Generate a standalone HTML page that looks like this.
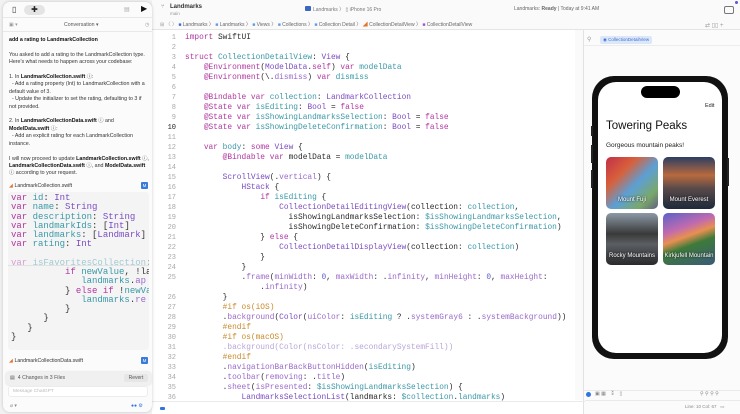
<!DOCTYPE html>
<html><head><meta charset="utf-8"><style>
*{margin:0;padding:0;box-sizing:border-box}
body{width:740px;height:414px;overflow:hidden;background:#fff;font-family:"Liberation Sans",sans-serif;position:relative;color:#222}
.a{position:absolute}
.code{font-family:"Liberation Mono",monospace;font-size:7.85px;line-height:10px;white-space:pre;color:#2b2b2b}
.ln{font-family:"Liberation Mono",monospace;font-size:7px;line-height:10px;color:#a8a8a8;text-align:right;width:26px;white-space:pre}
.k{color:#b0369f}.t{color:#7a4bc0}.i{color:#3a98a6}.p{color:#c98a2c}.f{color:#9a6ac9}.n{color:#5b5bd0}
.side{font-size:5.3px;line-height:7.4px;color:#333}
.side b{color:#111}
.lc{font-family:"Liberation Mono",monospace;font-size:9px;line-height:9.3px;white-space:pre;color:#333}
.tile{position:absolute;width:52px;height:52px;border-radius:5px;overflow:hidden}
.tile span{position:absolute;bottom:6px;left:0;right:0;text-align:center;color:#fff;font-size:6px;text-shadow:0 0 2px #000}
</style></head><body>

<div class="a" style="left:150px;top:0;width:590px;height:30px;background:#fafafa;border-bottom:1px solid #e4e4e4"></div>
<div class="a" style="left:161px;top:4px;font-size:6px;color:#999">⑂</div>
<div class="a" style="left:170px;top:4px;font-size:6px;font-weight:bold;color:#333">Landmarks</div>
<div class="a" style="left:170px;top:11px;font-size:4.5px;color:#999">main</div>
<div class="a" style="left:305px;top:6px;width:6px;height:5px;background:#3a66c4;border-radius:1px"></div>
<div class="a" style="left:313px;top:6px;font-size:5px;color:#777">Landmarks 〉 ▯ iPhone 16 Pro</div>
<div class="a" style="left:514px;top:6px;font-size:5px;color:#666">Landmarks: <b>Ready</b> | Today at 9:41 AM</div>
<div class="a" style="left:724px;top:6px;width:10px;height:8px;border:1px solid #777;border-radius:2px"></div>
<div class="a" style="left:735px;top:1px;width:3px;height:3px;background:#5a55d8;border-radius:50%"></div>
<div class="a" style="left:160px;top:21px;font-size:5px;color:#666;white-space:nowrap"><span style="color:#999">⊞ 〈 〉</span> <span style="color:#3a6fd0">■</span> Landmarks 〉 <span style="color:#5aa0e0">■</span> Landmarks 〉 <span style="color:#5aa0e0">■</span> Views 〉 <span style="color:#5aa0e0">■</span> Collections 〉 <span style="color:#5aa0e0">■</span> Collection Detail 〉 <span style="color:#e2742d">◢</span> CollectionDetailView 〉 <span style="color:#a04fd6">■</span> CollectionDetailView</div>
<div class="a" style="left:705px;top:22px;font-size:6px;color:#999">⇄ ▯▯ +</div>

<div class="a ln" style="left:150px;top:33px">1
2
3
4
5
6
7
8
9
<span style="color:#222">10</span>
11
12
13
14
15
16
17
18
19
20
21
22
23
24
25

26
27
28
29
30
31
32
33
34
35
36</div>
<div class="a code" style="left:185px;top:33px"><span class="k">import</span> SwiftUI

<span class="k">struct</span> <span class="i">CollectionDetailView</span>: <span class="t">View</span> {
    <span class="k">@Environment</span>(<span class="t">ModelData</span>.<span class="k">self</span>) <span class="k">var</span> <span class="i">modelData</span>
    <span class="k">@Environment</span>(\.<span class="f">dismiss</span>) <span class="k">var</span> <span class="i">dismiss</span>

    <span class="k">@Bindable</span> <span class="k">var</span> <span class="i">collection</span>: <span class="t">LandmarkCollection</span>
    <span class="k">@State</span> <span class="k">var</span> <span class="i">isEditing</span>: <span class="t">Bool</span> = <span class="k">false</span>
    <span class="k">@State</span> <span class="k">var</span> <span class="i">isShowingLandmarksSelection</span>: <span class="t">Bool</span> = <span class="k">false</span>
    <span class="k">@State</span> <span class="k">var</span> <span class="i">isShowingDeleteConfirmation</span>: <span class="t">Bool</span> = <span class="k">false</span>

    <span class="k">var</span> <span class="i">body</span>: <span class="k">some</span> <span class="t">View</span> {
        <span class="k">@Bindable</span> <span class="k">var</span> modelData = <span class="i">modelData</span>

        <span class="t">ScrollView</span>(.<span class="f">vertical</span>) {
            <span class="t">HStack</span> {
                <span class="k">if</span> <span class="i">isEditing</span> {
                    <span class="t">CollectionDetailEditingView</span>(collection: <span class="i">collection</span>,
                      isShowingLandmarksSelection: <span class="i">$isShowingLandmarksSelection</span>,
                      isShowingDeleteConfirmation: <span class="i">$isShowingDeleteConfirmation</span>)
                } <span class="k">else</span> {
                    <span class="t">CollectionDetailDisplayView</span>(collection: <span class="i">collection</span>)
                }
            }
            .<span class="f">frame</span>(<span class="f">minWidth</span>: <span class="n">0</span>, <span class="f">maxWidth</span>: .<span class="f">infinity</span>, <span class="f">minHeight</span>: <span class="n">0</span>, <span class="f">maxHeight</span>:
                .<span class="f">infinity</span>)
        }
        <span class="p">#if os(iOS)</span>
        .<span class="f">background</span>(<span class="t">Color</span>(<span class="f">uiColor</span>: <span class="i">isEditing</span> ? .<span class="f">systemGray6</span> : .<span class="f">systemBackground</span>))
        <span class="p">#endif</span>
        <span class="p">#if os(macOS)</span>
        <span style="color:#b9a5d8">.background(Color(nsColor: .secondarySystemFill))</span>
        <span class="p">#endif</span>
        .<span class="f">navigationBarBackButtonHidden</span>(<span class="i">isEditing</span>)
        .<span class="f">toolbar</span>(<span class="f">removing</span>: .<span class="f">title</span>)
        .<span class="f">sheet</span>(<span class="f">isPresented</span>: <span class="i">$isShowingLandmarksSelection</span>) {
            <span class="t">LandmarksSelectionList</span>(landmarks: <span class="i">$collection</span>.<span class="i">landmarks</span>)</div>

<div class="a" style="left:575px;top:30px;width:8px;height:370px;background:#fafafa"></div>
<div class="a" style="left:583px;top:30px;width:1px;height:384px;background:#e2e2e2"></div>
<div class="a" style="left:584px;top:30px;width:156px;height:384px;background:#fbfbfb"></div>
<div class="a" style="left:584px;top:45px;width:156px;height:1px;background:#ececec"></div>
<div class="a" style="left:587px;top:36px;font-size:6px;color:#999">⚲</div>
<div class="a" style="left:600px;top:36px;height:8px;padding:0 3px;background:#dce8fa;border-radius:2px;font-size:4.5px;line-height:8px;color:#3d6fd0">◉ CollectionDetailView</div>

<div class="a" style="left:592px;top:76px;width:136px;height:283px;background:#111;border-radius:22px"></div>
<div class="a" style="left:591px;top:126px;width:2px;height:10px;background:#222"></div>
<div class="a" style="left:591px;top:145px;width:2px;height:18px;background:#222"></div>
<div class="a" style="left:591px;top:170px;width:2px;height:18px;background:#222"></div>
<div class="a" style="left:727px;top:158px;width:2px;height:28px;background:#222"></div>
<div class="a" style="left:598px;top:82px;width:124px;height:271px;background:#fff;border-radius:18px"></div>
<div class="a" style="left:641px;top:86px;width:39px;height:12px;background:#000;border-radius:6px"></div>
<div class="a" style="left:705px;top:103px;font-size:5.5px;color:#222">Edit</div>
<div class="a" style="left:606px;top:120px;font-size:11.5px;color:#111">Towering Peaks</div>
<div class="a" style="left:606px;top:142px;font-size:6.5px;color:#222">Gorgeous mountain peaks!</div>
<div class="tile" style="left:606px;top:157px;background:linear-gradient(135deg,#c23048 0%,#d8603a 30%,#5c9fd6 55%,#7aa86a 80%,#606080 100%)"><span>Mount Fuji</span></div>
<div class="tile" style="left:663px;top:157px;background:linear-gradient(180deg,#2c3e62 0%,#b86a3e 35%,#5a4a4a 60%,#1e2a3a 100%)"><span>Mount Everest</span></div>
<div class="tile" style="left:606px;top:213px;background:linear-gradient(180deg,#8c9aa6 0%,#3a3a3a 40%,#5a5e62 60%,#2a2a2c 100%)"><span>Rocky Mountains</span></div>
<div class="tile" style="left:663px;top:213px;background:linear-gradient(160deg,#5a62c8 0%,#c06ab0 30%,#e89050 45%,#3e7a3a 60%,#3a5a7a 100%)"><span>Kirkjufell Mountain</span></div>

<div class="a" style="left:584px;top:390px;width:156px;height:1px;background:#eaeaea"></div>
<div class="a" style="left:586px;top:392px;width:5px;height:5px;background:#2f74e0;border-radius:50%"></div>
<div class="a" style="left:595px;top:391px;font-size:5px;color:#888">▣ ▦ &nbsp;&nbsp; ⁑ &nbsp;&nbsp; ▯</div>
<div class="a" style="left:700px;top:391px;font-size:5px;color:#888">⚲ ⚲ ⚲ ⚲</div>
<div class="a" style="left:585px;top:400px;width:155px;height:1px;background:#eaeaea"></div>
<div class="a" style="left:685px;top:404px;font-size:4.5px;color:#888">Line: 10 Col: 67 &nbsp; ▭</div>
<div class="a" style="left:150px;top:401px;width:435px;height:1px;background:#eaeaea"></div>
<div class="a" style="left:160px;top:407px;width:5px;height:3px;background:#2f74e0;border-radius:1px"></div>

<div class="a" style="left:0;top:0;width:152px;height:414px;background:#f2f2f2"></div>
<div class="a" style="left:3px;top:2px;width:149px;height:410px;background:#fbfbfb;border-radius:7px;box-shadow:0 0 3px rgba(0,0,0,.2)"></div>
<div class="a" style="left:12px;top:5px;font-size:8px;color:#333">▯</div>
<div class="a" style="left:24px;top:5px;width:21px;height:10px;background:#e4e4e4;border-radius:5px;font-size:8px;line-height:10px;text-align:center">✚</div>
<div class="a" style="left:124px;top:6px;font-size:6px;color:#aaa">▤</div>
<div class="a" style="left:141px;top:4px;font-size:8px;color:#111">▶</div>
<div class="a" style="left:3px;top:17px;width:149px;height:1px;background:#e8e8e8"></div>
<div class="a" style="left:9px;top:22px;font-size:5px;color:#999">▣ ▾</div>
<div class="a" style="left:64px;top:22px;font-size:5.2px;color:#555">Conversation ▾</div>
<div class="a" style="left:145px;top:22px;font-size:5px;color:#999">◷</div>
<div class="a" style="left:3px;top:31px;width:149px;height:1px;background:#e8e8e8"></div>
<div class="a side" style="left:9px;top:37px;width:140px">
<b>add a rating to LandmarkCollection</b><br><br>
You asked to add a rating to the LandmarkCollection type. Here's what needs to happen across your codebase:<br><br>
1. In <b>LandmarkCollection.swift</b> ⓘ:<br>
&nbsp; - Add a rating property (Int) to LandmarkCollection with a default value of 3.<br>
&nbsp; - Update the initializer to set the rating, defaulting to 3 if not provided.<br><br>
2. In <b>LandmarkCollectionData.swift</b> ⓘ and <b>ModelData.swift</b> ⓘ:<br>
&nbsp; - Add an explicit rating for each LandmarkCollection instance.<br><br>
I will now proceed to update <b>LandmarkCollection.swift</b> ⓘ, <b>LandmarkCollectionData.swift</b> ⓘ, and <b>ModelData.swift</b> ⓘ according to your request.
</div>
<div class="a" style="left:9px;top:183px;font-size:5.2px;color:#333"><span style="color:#e2742d">◢</span> LandmarkCollection.swift</div>
<div class="a" style="left:141px;top:182px;width:7px;height:7px;background:#3a7ad8;border-radius:1px;color:#fff;font-size:4.5px;line-height:7px;text-align:center">M</div>
<div class="a" style="left:8px;top:192px;width:141px;height:158px;background:#f4f4f5;border-radius:3px;overflow:hidden">
<div class="lc" style="position:absolute;left:3px;top:2px"><span class="k">var</span> <span class="i">id</span>: <span class="t">Int</span>
<span class="k">var</span> <span class="i">name</span>: <span class="t">String</span>
<span class="k">var</span> <span class="i">description</span>: <span class="t">String</span>
<span class="k">var</span> <span class="i">landmarkIds</span>: [<span class="t">Int</span>]
<span class="k">var</span> <span class="i">landmarks</span>: [<span class="t">Landmark</span>] =
<span class="k">var</span> <span class="i">rating</span>: <span class="t">Int</span>

<span style="opacity:.45"><span class="k">var</span> <span class="i">isFavoritesCollection</span>: B</span></div>
<div style="position:absolute;left:0;top:73px;width:141px;height:1px;background:#e2e2e2"></div>
<div class="lc" style="position:absolute;left:3px;top:76px">          <span class="k">if</span> <span class="i">newValue</span>, !la
             <span class="i">landmarks</span>.<span class="f">ap</span>
          } <span class="k">else if</span> !<span class="i">newVa</span>
             <span class="i">landmarks</span>.<span class="f">re</span>
          }
      }
   }
}</div>
</div>
<div class="a" style="left:9px;top:358px;font-size:5.2px;color:#333"><span style="color:#e2742d">◢</span> LandmarkCollectionData.swift</div>
<div class="a" style="left:141px;top:357px;width:7px;height:7px;background:#3a7ad8;border-radius:1px;color:#fff;font-size:4.5px;line-height:7px;text-align:center">M</div>
<div class="a" style="left:6px;top:372px;width:145px;height:13px;background:#f0f0f0;border-radius:3px;box-shadow:0 0 2px rgba(0,0,0,.15)"></div>
<div class="a" style="left:10px;top:375px;font-size:5.2px;color:#555">▤ &nbsp;4 Changes in 3 Files</div>
<div class="a" style="left:124px;top:374px;width:24px;height:8px;background:#e6e6e6;border-radius:2px;font-size:5px;line-height:8px;text-align:center;color:#555">Revert</div>
<div class="a" style="left:8px;top:386px;width:140px;height:11px;background:#fff;border-radius:3px;border:1px solid #ececec;font-size:4.8px;line-height:9px;padding-left:4px;color:#bbb">Message ChatGPT</div>
<div class="a" style="left:10px;top:403px;font-size:5px;color:#888">⌀ ▾</div>
<div class="a" style="left:131px;top:403px;font-size:5px;color:#2f74e0">●● ⚙</div>
</body></html>
